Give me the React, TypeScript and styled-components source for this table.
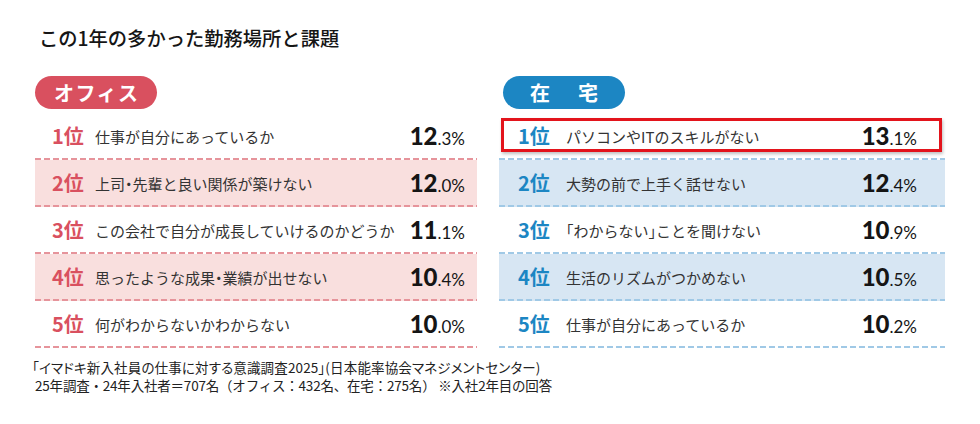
import React from "react";
import styled, { createGlobalStyle, css } from "styled-components";

const GlobalStyle = createGlobalStyle`
  html, body { margin: 0; padding: 0; background: #ffffff; }
  body { font-family: "Noto Sans CJK JP", "Noto Sans", sans-serif; color: #222; }
`;

type Theme = "red" | "blue";

const palette = {
  red: { main: "#d9505f", bg: "#f9dfde", dash: "#e6949b" },
  blue: { main: "#1c86c3", bg: "#d7e6f3", dash: "#a0c9e6" },
};

const Page = styled.div`
  width: 980px;
  height: 424px;
  box-sizing: border-box;
  padding: 24px 0 0 35px;
`;

const Title = styled.h1`
  margin: 0 0 0 4px;
  font-size: 19.3px;
  line-height: 28px;
  font-weight: 500;
  color: #151515;
`;

const Columns = styled.div`
  display: grid;
  grid-template-columns: 442px 446px;
  column-gap: 22px;
  margin-top: 24px;
`;

const Panel = styled.section`
  display: flex;
  flex-direction: column;
`;

const Pill = styled.div<{ $theme: Theme; $offset: number; $spacing: number }>`
  width: 122px;
  height: 33px;
  margin-left: ${(p) => p.$offset}px;
  border-radius: 17px;
  background: ${(p) => palette[p.$theme].main};
  color: #fff;
  display: flex;
  align-items: center;
  justify-content: center;
  font-size: 20px;
  font-weight: 700;
  letter-spacing: ${(p) => p.$spacing}px;
  text-indent: ${(p) => p.$spacing}px;
`;

const List = styled.div`
  margin-top: 4px;
  display: flex;
  flex-direction: column;
`;

const Row = styled.div<{
  $theme: Theme;
  $shaded: boolean;
  $padL: number;
  $padR: number;
  $rankW: number;
  $highlight?: boolean;
}>`
  position: relative;
  height: 47px;
  box-sizing: border-box;
  display: grid;
  grid-template-columns: ${(p) => p.$rankW}px 1fr auto;
  align-items: center;
  padding: 0 ${(p) => p.$padR}px 1px ${(p) => p.$padL}px;
  background-color: ${(p) => (p.$shaded ? palette[p.$theme].bg : "transparent")};
  background-image: linear-gradient(
    to right,
    ${(p) => palette[p.$theme].dash} 0 6px,
    transparent 6px 9px
  );
  background-size: 9px 2px;
  background-repeat: repeat-x;
  background-position: left bottom;
  ${(p) =>
    p.$highlight &&
    css`
      &::after {
        content: "";
        position: absolute;
        top: 5px;
        left: 2px;
        right: 3px;
        bottom: 8px;
        border: 3px solid #e3141c;
        box-shadow: 1px 2px 3px rgba(0, 0, 0, 0.25);
        pointer-events: none;
      }
    `}
`;

const Rank = styled.span<{ $theme: Theme }>`
  color: ${(p) => palette[p.$theme].main};
  font-size: 20px;
  font-weight: 700;
  line-height: 1;
`;

const Item = styled.span`
  font-size: 15px;
  color: #333;
  white-space: nowrap;
  font-feature-settings: "halt";
`;

const Pct = styled.span`
  font-family: "Lato", "Noto Sans", sans-serif;
  color: #151515;
  white-space: nowrap;
  line-height: 1;
`;

const PctInt = styled.span`
  font-size: 24px;
  font-weight: 900;
`;

const PctDec = styled.span`
  font-size: 17px;
  font-weight: 400;
`;

const Footer = styled.div`
  margin: 10px 0 0 -3px;
  display: flex;
  flex-direction: column;
  font-size: 13.5px;
  line-height: 18px;
  color: #222;
`;

const FooterLine = styled.span<{ $proportional?: boolean; $tracking: number }>`
  display: block;
  white-space: nowrap;
  padding-left: ${(p) => (p.$proportional ? 0 : 3)}px;
  letter-spacing: ${(p) => p.$tracking}px;
  font-feature-settings: ${(p) => (p.$proportional ? '"palt"' : "normal")};
`;

type Entry = { rank: number; text: string; int: string; dec: string };

const office: Entry[] = [
  { rank: 1, text: "仕事が自分にあっているか", int: "12", dec: ".3%" },
  { rank: 2, text: "上司・先輩と良い関係が築けない", int: "12", dec: ".0%" },
  { rank: 3, text: "この会社で自分が成長していけるのかどうか", int: "11", dec: ".1%" },
  { rank: 4, text: "思ったような成果・業績が出せない", int: "10", dec: ".4%" },
  { rank: 5, text: "何がわからないかわからない", int: "10", dec: ".0%" },
];

const home: Entry[] = [
  { rank: 1, text: "パソコンやITのスキルがない", int: "13", dec: ".1%" },
  { rank: 2, text: "大勢の前で上手く話せない", int: "12", dec: ".4%" },
  { rank: 3, text: "「わからない」ことを聞けない", int: "10", dec: ".9%" },
  { rank: 4, text: "生活のリズムがつかめない", int: "10", dec: ".5%" },
  { rank: 5, text: "仕事が自分にあっているか", int: "10", dec: ".2%" },
];

type PanelProps = {
  theme: Theme;
  label: string;
  entries: Entry[];
  pillOffset: number;
  pillSpacing: number;
  padL: number;
  padR: number;
  rankW: number;
  highlightFirst?: boolean;
};

function RankPanel(p: PanelProps) {
  return (
    <Panel>
      <Pill $theme={p.theme} $offset={p.pillOffset} $spacing={p.pillSpacing}>
        {p.label}
      </Pill>
      <List>
        {p.entries.map((e, i) => (
          <Row
            key={e.rank}
            $theme={p.theme}
            $shaded={i % 2 === 1}
            $padL={p.padL}
            $padR={p.padR}
            $rankW={p.rankW}
            $highlight={p.highlightFirst && i === 0}
          >
            <Rank $theme={p.theme}>{e.rank}位</Rank>
            <Item>{e.text}</Item>
            <Pct>
              <PctInt>{e.int}</PctInt>
              <PctDec>{e.dec}</PctDec>
            </Pct>
          </Row>
        ))}
      </List>
    </Panel>
  );
}

export default function App() {
  return (
    <>
      <GlobalStyle />
      <Page>
        <Title>この1年の多かった勤務場所と課題</Title>
        <Columns>
          <RankPanel
            theme="red"
            label="オフィス"
            entries={office}
            pillOffset={0}
            pillSpacing={1.5}
            padL={17}
            padR={12}
            rankW={43}
          />
          <RankPanel
            theme="blue"
            label="在　宅"
            entries={home}
            pillOffset={4}
            pillSpacing={4}
            padL={19}
            padR={28}
            rankW={48}
            highlightFirst
          />
        </Columns>
        <Footer>
          <FooterLine $proportional $tracking={0.15}>
            「イマドキ新入社員の仕事に対する意識調査2025」(日本能率協会マネジメントセンター)
          </FooterLine>
          <FooterLine $tracking={-0.2}>
            25年調査・24年入社者＝707名（オフィス：432名、在宅：275名） ※入社2年目の回答
          </FooterLine>
        </Footer>
      </Page>
    </>
  );
}
